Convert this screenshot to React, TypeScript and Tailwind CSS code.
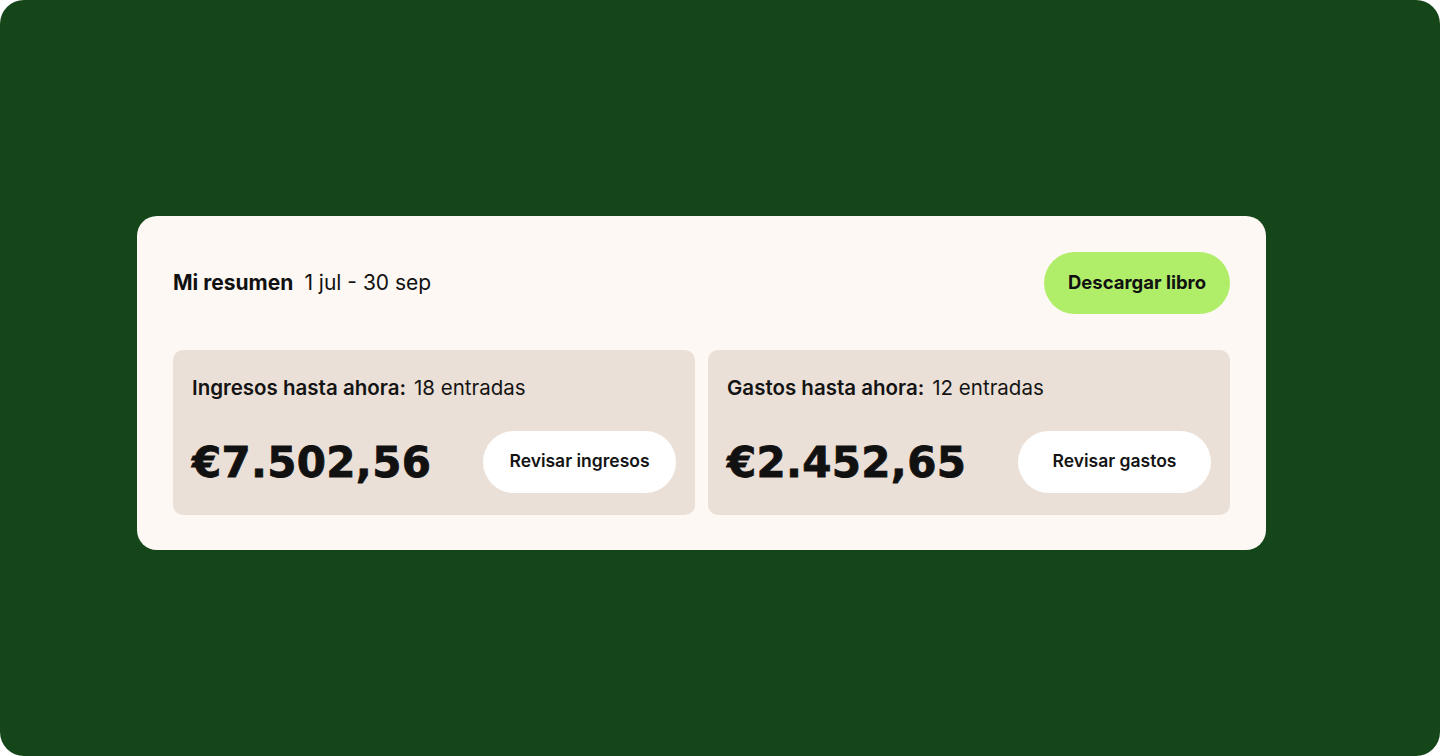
import React from 'react';

const Panel = ({ title, count, amount, action }: { title: string; count: string; amount: string; action: string }) => (
    <div className="flex-1 bg-[#ebe0d7] rounded-[10px] pl-[19px] pr-[19px] pt-[24px] pb-[22px] flex flex-col gap-[30px]">
        <p className="text-[20.5px] leading-[27px] text-[#141414]">
            <span className="font-semibold">{title}</span>
            <span className="ml-[8px]">{count}</span>
        </p>
        <div className="flex items-center justify-between">
            <span className="font-['DejaVu_Sans',sans-serif] font-bold text-[42px] leading-none tracking-[0.3px] text-[#111] pt-[3px] [-webkit-text-stroke:0.8px_#111]">
                {amount}
            </span>
            <button className="h-[62px] w-[193px] rounded-full bg-white text-[17.5px] font-semibold text-[#141414]">
                {action}
            </button>
        </div>
    </div>
);

export default function App() {
    return (
        <div className="bg-white w-[1440px] h-[756px]">
            <div className="w-full h-full bg-[#154619] rounded-[24px] flex items-center justify-center font-['Inter',sans-serif]">
                <div className="w-[1129px] bg-[#fdf8f3] rounded-[20px] p-[36px] pb-[35px] flex flex-col gap-[36px] mt-[9px] mr-[37px]">
                    <div className="flex items-center justify-between">
                        <p className="text-[21px] text-[#111]">
                            <span className="font-bold">Mi resumen</span>
                            <span className="ml-[11px]">1 jul - 30 sep</span>
                        </p>
                        <button className="h-[62px] px-[24px] rounded-full bg-[#b0ee6a] text-[18.5px] font-bold text-[#111]">
                            Descargar libro
                        </button>
                    </div>
                    <div className="flex gap-[13px]">
                        <Panel title="Ingresos hasta ahora:" count="18 entradas" amount="€7.502,56" action="Revisar ingresos" />
                        <Panel title="Gastos hasta ahora:" count="12 entradas" amount="€2.452,65" action="Revisar gastos" />
                    </div>
                </div>
            </div>
        </div>
    );
}
